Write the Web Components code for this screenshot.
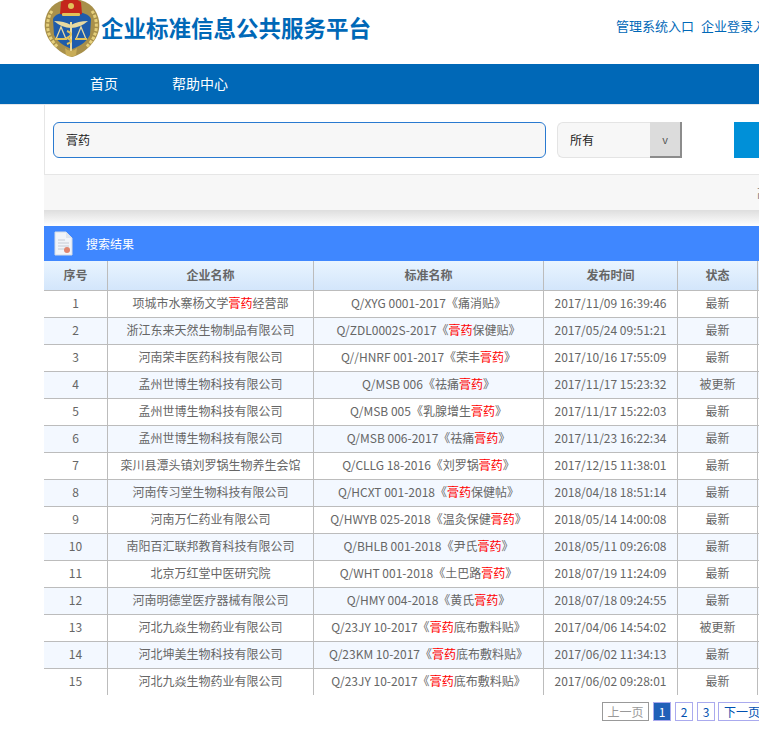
<!DOCTYPE html>
<html lang="zh">
<head>
<meta charset="utf-8">
<title>企业标准信息公共服务平台</title>
<style>
  html, body { margin: 0; padding: 0; overflow: hidden; background: #fff; }
  body { width: 1100px; font-family: "Noto Sans CJK SC", "Liberation Sans", sans-serif; font-size: 12px; color: #666; }
</style>
</head>
<body>
<site-header></site-header>
<site-nav></site-nav>
<main-content>
  <search-panel></search-panel>
  <result-table></result-table>
  <page-links></page-links>
</main-content>

<script>
const FONT = '"Noto Sans CJK SC", "Liberation Sans", sans-serif';

class SiteHeader extends HTMLElement {
  constructor() {
    super();
    this.attachShadow({ mode: 'open' });
    this.shadowRoot.innerHTML = `
      <style>
        :host { display: flex; align-items: flex-start; height: 64px; padding-left: 44px; overflow: hidden; }
        svg { width: 56px; height: 63px; margin-top: -5px; flex: none; }
        h1 { margin: 10px 0 0 1px; font: bold 22.5px/34px ${FONT}; color: #0068b7; }
        .links { margin: 17px 0 0 auto; width: 484px; display: flex; gap: 7px; font-size: 13px; line-height: 18px; color: #0068b7; white-space: nowrap; }
      </style>
      <svg viewBox="0 0 56 63">
        <path d="M28 4 C6 4 -1 22 1 34 C3 46 14 58 28 62 C42 58 53 46 55 34 C57 22 50 4 28 4Z" fill="#a8904a"/>
        <path d="M8 16 C1 26 2 42 14 52 M48 16 C55 26 54 42 42 52" fill="none" stroke="#e6d07c" stroke-width="3" stroke-dasharray="3 1.5"/>
        <path d="M9 24 C12 14 44 14 47 24 L46 40 C42 48 34 52 28 54 C22 52 14 48 10 40 Z" fill="#1f5cab"/>
        <path d="M17 7 Q27 0 37 7 L38 19 Q27 23 16 19 Z" fill="#c4261c"/>
        <circle cx="27" cy="11" r="3" fill="#e2c25a"/>
        <rect x="18" y="18" width="18" height="3" rx="1" fill="#e2c25a"/>
        <path d="M10 26 Q20 26 27 30 Q34 26 44 26 Q36 33 27 33 Q18 33 10 26Z" fill="#e8d9a0"/>
        <rect x="26" y="27" width="2" height="30" fill="#e8d9a0"/>
        <path d="M23 36 Q31 39 23 43 Q31 46 23 49" fill="none" stroke="#e2c25a" stroke-width="2"/>
        <path d="M17 32 L12 44 H22 Z M37 32 L32 44 H42 Z" fill="none" stroke="#e8d9a0" stroke-width="1.3"/>
        <path d="M11 44 h12 M31 44 h12" stroke="#e2c25a" stroke-width="2"/>
        <path d="M21 53 Q27 59 33 53 L32 60 Q27 63 22 60 Z" fill="#c9ad58"/>
      </svg>
      <h1>企业标准信息公共服务平台</h1>
      <div class="links"><span>管理系统入口</span><span>企业登录入口</span></div>
    `;
  }
}

class SiteNav extends HTMLElement {
  constructor() {
    super();
    this.attachShadow({ mode: 'open' });
    this.shadowRoot.innerHTML = `
      <style>
        :host { display: flex; height: 40px; background: #0068b7; padding-left: 90px; gap: 54px; color: #fff; font-size: 14px; line-height: 38px; border-bottom: 1px solid #e4e6ea; }
      </style>
      <span>首页</span><span>帮助中心</span>
    `;
  }
}

class MainContent extends HTMLElement {
  constructor() {
    super();
    this.attachShadow({ mode: 'open' });
    this.shadowRoot.innerHTML = `
      <style>:host { display: block; margin-left: 44px; }</style>
      <slot></slot>
    `;
  }
}

class SearchPanel extends HTMLElement {
  constructor() {
    super();
    this.attachShadow({ mode: 'open' });
    this.shadowRoot.innerHTML = `
      <style>
        :host { display: block; color: #222; }
        .top { display: flex; align-items: flex-start; height: 70px; box-sizing: border-box; padding: 17px 0 0 8px; background: #fff; border-left: 1px solid #e6e6e6; border-bottom: 1px solid #e6e6e6; }
        .input, .select { box-sizing: border-box; height: 36px; line-height: 34px; background: #f7f7f7; padding-left: 12px; border-radius: 6px; }
        .input { width: 493px; border: 1px solid #2a7ad0; }
        .select { width: 93px; margin-left: 11px; border: 1px solid #e4e4e4; border-right: 0; border-radius: 6px 0 0 6px; }
        .arrow { box-sizing: border-box; width: 32px; height: 36px; background: #dcdcdc; border-right: 2px solid #8c8c8c; border-bottom: 2px solid #8c8c8c; text-align: center; line-height: 34px; font-size: 11px; color: #555; }
        .go { width: 100px; height: 36px; margin-left: 52px; background: #0090d8; color: #fff; text-align: center; line-height: 36px; font-size: 14px; flex: none; }
        .more { height: 35px; line-height: 36px; padding-left: 713px; color: #777; white-space: nowrap; background: #f7f7f7; }
        .shade { height: 16px; background: linear-gradient(#dedede, #fff); }
      </style>
      <div class="top">
        <div class="input">膏药</div>
        <div class="select">所有</div>
        <div class="arrow">v</div>
        <div class="go">搜索</div>
      </div>
      <div class="more">高级搜索</div>
      <div class="shade"></div>
    `;
  }
}

const ROWS = [
  ['项城市水寨杨文学膏药经营部', 'Q/XYG 0001-2017《痛消贴》', '2017/11/09 16:39:46', '最新'],
  ['浙江东来天然生物制品有限公司', 'Q/ZDL0002S-2017《膏药保健贴》', '2017/05/24 09:51:21', '最新'],
  ['河南荣丰医药科技有限公司', 'Q//HNRF 001-2017《荣丰膏药》', '2017/10/16 17:55:09', '最新'],
  ['孟州世博生物科技有限公司', 'Q/MSB 006《祛痛膏药》', '2017/11/17 15:23:32', '被更新'],
  ['孟州世博生物科技有限公司', 'Q/MSB 005《乳腺增生膏药》', '2017/11/17 15:22:03', '最新'],
  ['孟州世博生物科技有限公司', 'Q/MSB 006-2017《祛痛膏药》', '2017/11/23 16:22:34', '最新'],
  ['栾川县潭头镇刘罗锅生物养生会馆', 'Q/CLLG 18-2016《刘罗锅膏药》', '2017/12/15 11:38:01', '最新'],
  ['河南传习堂生物科技有限公司', 'Q/HCXT 001-2018《膏药保健帖》', '2018/04/18 18:51:14', '最新'],
  ['河南万仁药业有限公司', 'Q/HWYB 025-2018《温灸保健膏药》', '2018/05/14 14:00:08', '最新'],
  ['南阳百汇联邦教育科技有限公司', 'Q/BHLB 001-2018《尹氏膏药》', '2018/05/11 09:26:08', '最新'],
  ['北京万红堂中医研究院', 'Q/WHT 001-2018《土巴路膏药》', '2018/07/19 11:24:09', '最新'],
  ['河南明德堂医疗器械有限公司', 'Q/HMY 004-2018《黄氏膏药》', '2018/07/18 09:24:55', '最新'],
  ['河北九焱生物药业有限公司', 'Q/23JY 10-2017《膏药底布敷料贴》', '2017/04/06 14:54:02', '被更新'],
  ['河北坤美生物科技有限公司', 'Q/23KM 10-2017《膏药底布敷料贴》', '2017/06/02 11:34:13', '最新'],
  ['河北九焱生物药业有限公司', 'Q/23JY 10-2017《膏药底布敷料贴》', '2017/06/02 09:28:01', '最新'],
];

function mark(text) {
  return text.replace('膏药', '<b>膏药</b>');
}

class ResultTable extends HTMLElement {
  constructor() {
    super();
    this.attachShadow({ mode: 'open' });
    const body = ROWS.map((r, i) => `
      <tr>
        <td>${i + 1}</td>
        <td>${mark(r[0])}</td>
        <td>${mark(r[1])}</td>
        <td>${r[2]}</td>
        <td>${r[3]}</td>
        <td></td>
      </tr>`).join('');
    this.shadowRoot.innerHTML = `
      <style>
        :host { display: block; }
        .bar { display: flex; align-items: center; height: 35px; background: #3f87ff; color: #fff; padding-left: 10px; }
        .bar svg { width: 19px; height: 25px; margin-right: 13px; flex: none; }
        table { border-collapse: separate; border-spacing: 0; table-layout: fixed; width: 900px; }
        th, td { padding: 0; text-align: center; border-right: 1px solid #bcbcbc; border-top: 1px solid #bcbcbc; white-space: nowrap; overflow: hidden; font-size: 12px; }
        tr:first-child th { border-top: 0; }
        th { height: 27px; padding-bottom: 2px; background: linear-gradient(#e9f4ff, #d3e6fb); color: #666; }
        td { height: 22px; padding-bottom: 4px; background: #fff; color: #666; }
        tr:nth-child(even) td { background: #f3f8ff; }
        td b { font-weight: normal; color: #f00; }
      </style>
      <div class="bar">
        <svg viewBox="0 0 19 25">
          <path d="M1 1 H12 L18 7 V24 H1 Z" fill="#f1f4f9" stroke="#d4dbe6"/>
          <path d="M12 1 V7 H18" fill="#dfe5ee"/>
          <path d="M4 9 H11 M4 12 H15 M4 15 H15 M4 18 H10" stroke="#c6ccd6" stroke-width="1"/>
          <circle cx="13" cy="19" r="3" fill="#e0856f"/>
        </svg>
        <span>搜索结果</span>
      </div>
      <table>
        <colgroup>
          <col style="width:64px"><col style="width:206px"><col style="width:230px"><col style="width:134px"><col style="width:80px"><col>
        </colgroup>
        <thead>
          <tr><th>序号</th><th>企业名称</th><th>标准名称</th><th>发布时间</th><th>状态</th><th></th></tr>
        </thead>
        <tbody>${body}</tbody>
      </table>
    `;
  }
}

class PageLinks extends HTMLElement {
  constructor() {
    super();
    this.attachShadow({ mode: 'open' });
    this.shadowRoot.innerHTML = `
      <style>
        :host { display: flex; gap: 4px; margin-top: 7px; padding-left: 558px; height: 19px; font-size: 12px; line-height: 17px; white-space: nowrap; }
        span { box-sizing: border-box; height: 19px; border: 1px solid #aaaaee; color: #0050b0; text-align: center; width: 18px; flex: none; }
        .prev { width: 47px; border-color: #999; color: #999; }
        .cur { background: #2060b8; color: #fff; }
        .next { width: 48px; margin-left: -1px; }
      </style>
      <span class="prev">上一页</span><span class="cur">1</span><span>2</span><span>3</span><span class="next">下一页</span>
    `;
  }
}

customElements.define('site-header', SiteHeader);
customElements.define('site-nav', SiteNav);
customElements.define('main-content', MainContent);
customElements.define('search-panel', SearchPanel);
customElements.define('result-table', ResultTable);
customElements.define('page-links', PageLinks);
</script>
</body>
</html>
